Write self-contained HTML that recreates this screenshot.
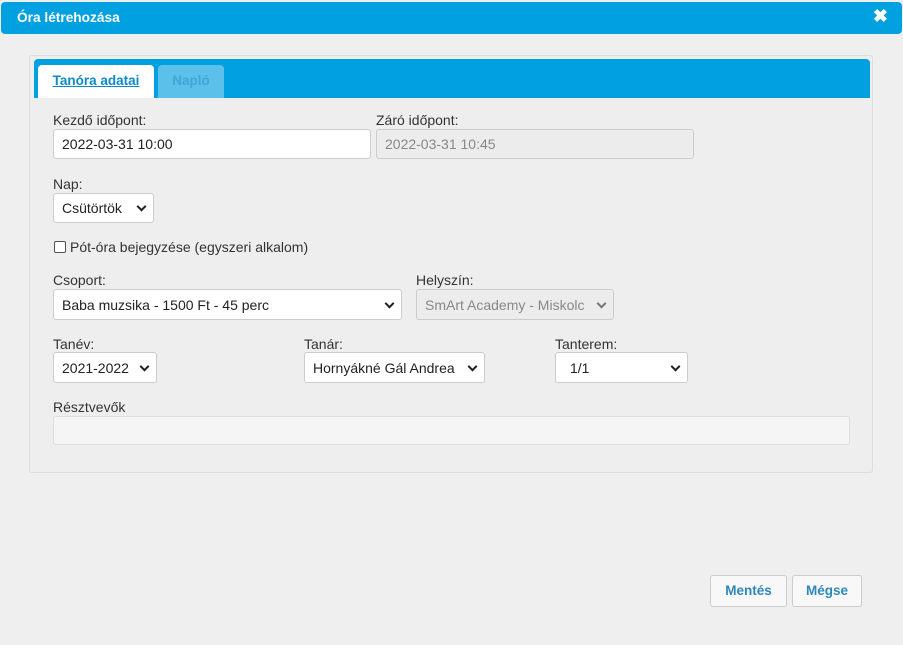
<!DOCTYPE html>
<html><head><meta charset="utf-8"><style>
*{box-sizing:border-box}
body{margin:0;width:903px;height:645px;background:#efefef;font-family:"Liberation Sans",sans-serif;font-size:14px;color:#333;position:relative;overflow:hidden}
.a{position:absolute}
.hdr{left:1px;top:2px;width:901px;height:32px;background:#00a0e1;border-radius:4px;color:#fff;font-weight:bold;font-size:13.7px;padding:8px 0 0 16px}
.x{right:15px;top:6px;color:#fff;font-weight:bold;font-size:18px}
.panel{left:29px;top:55px;width:844px;height:418px;border:1px solid #ddd;border-radius:3px;background:#eee}
.tabs{left:34px;top:59px;width:836px;height:39px;background:#00a0e1;border-radius:4px 4px 0 0}
.t1{left:38px;top:65px;width:116px;height:33px;background:#fff;border-radius:4px 4px 0 0;color:#0a8ac7;font-weight:bold;text-decoration:underline;text-align:center;padding-top:8px;font-size:13.5px}
.t2{left:158px;top:65px;width:66px;height:33px;background:#5bc1ea;border-radius:4px 4px 0 0;color:#3fa7d6;font-weight:bold;text-align:center;padding-top:8px;font-size:13.5px}
.lbl{font-size:14px;color:#333}
.in{background:#fff;border:1px solid #ccc;border-radius:3px;padding:0 8px;display:flex;align-items:center;font-size:14px;color:#222}
.dis{background:#ececec;color:#888}
.sel::after{content:"";position:absolute;right:8px;top:50%;width:5px;height:5px;border-right:2px solid #222;border-bottom:2px solid #222;transform:translateY(-70%) rotate(45deg)}
.dis.sel::after{border-color:#777}
.btn{background:#f8f8f8;border:1px solid #ccc;border-radius:3px;color:#2e87b8;font-weight:bold;text-align:center;padding-top:7px;font-size:13.5px}
</style></head><body>
<div class="a hdr">Óra létrehozása</div>
<div class="a x">✖</div>
<div class="a panel"></div>
<div class="a tabs"></div>
<div class="a t1">Tanóra adatai</div>
<div class="a t2">Napló</div>

<div class="a lbl" style="left:53px;top:112px">Kezdő időpont:</div>
<div class="a in" style="left:53px;top:129px;width:318px;height:30px">2022-03-31 10:00</div>
<div class="a lbl" style="left:376px;top:112px">Záró időpont:</div>
<div class="a in dis" style="left:376px;top:129px;width:318px;height:30px">2022-03-31 10:45</div>

<div class="a lbl" style="left:53px;top:176px">Nap:</div>
<div class="a in sel" style="left:53px;top:193px;width:101px;height:30px">Csütörtök</div>

<div class="a" style="left:54px;top:241px;width:12px;height:12px;border:1px solid #555;border-radius:2px;background:#fff"></div>
<div class="a lbl" style="left:70px;top:239px">Pót-óra bejegyzése (egyszeri alkalom)</div>

<div class="a lbl" style="left:53px;top:272px">Csoport:</div>
<div class="a in sel" style="left:53px;top:289px;width:349px;height:31px">Baba muzsika - 1500 Ft - 45 perc</div>
<div class="a lbl" style="left:416px;top:272px">Helyszín:</div>
<div class="a in dis sel" style="left:416px;top:289px;width:198px;height:31px">SmArt Academy - Miskolc</div>

<div class="a lbl" style="left:53px;top:336px">Tanév:</div>
<div class="a in sel" style="left:53px;top:352px;width:104px;height:31px">2021-2022</div>
<div class="a lbl" style="left:304px;top:336px">Tanár:</div>
<div class="a in sel" style="left:304px;top:352px;width:181px;height:31px">Hornyákné Gál Andrea</div>
<div class="a lbl" style="left:555px;top:336px">Tanterem:</div>
<div class="a in sel" style="left:555px;top:352px;width:133px;height:31px;padding-left:14px">1/1</div>

<div class="a lbl" style="left:53px;top:399px">Résztvevők</div>
<div class="a" style="left:53px;top:416px;width:797px;height:29px;border:1px solid #ddd;border-radius:3px;background:#f5f5f5"></div>

<div class="a btn" style="left:710px;top:575px;width:77px;height:32px">Mentés</div>
<div class="a btn" style="left:792px;top:575px;width:70px;height:32px">Mégse</div>
</body></html>
